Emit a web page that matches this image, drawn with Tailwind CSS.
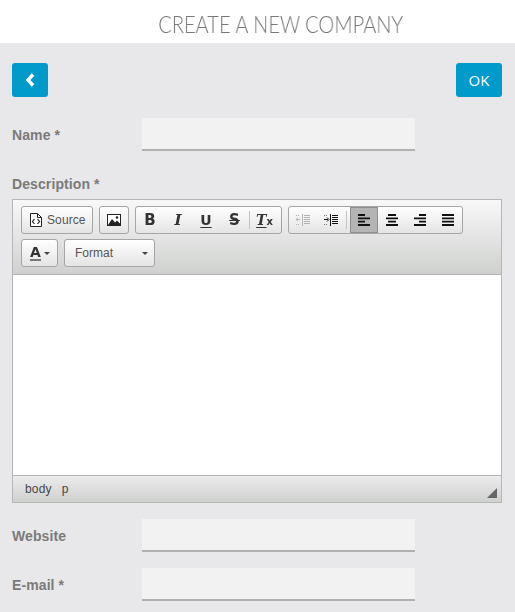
<!DOCTYPE html>
<html>
<head>
<meta charset="utf-8">
<script src="https://cdn.jsdelivr.net/npm/@tailwindcss/browser@4"></script>
</head>
<body class="bg-[#e8e8ea] font-['Liberation_Sans',sans-serif] h-[612px] overflow-hidden">
<header class="h-[43px] bg-white flex items-center justify-center pl-[47px]">
  <h1 class="font-['Lato',sans-serif] font-light text-[23px] leading-none text-[#777] pt-[6px] scale-x-[0.87] whitespace-nowrap will-change-transform">CREATE A NEW COMPANY</h1>
</header>
<main class="px-3 pr-[13px]">
  <div class="flex justify-between pt-5">
    <button class="w-9 h-[34px] bg-[#009bcb] rounded-[3px] flex items-center justify-center">
      <svg width="10" height="14" viewBox="0 0 10 14"><path d="M8 1.5 3 7l5 5.5" fill="none" stroke="#fff" stroke-width="3.4"/></svg>
    </button>
    <button class="w-[46px] h-[34px] bg-[#009bcb] rounded-[3px] text-white text-[15px] font-medium font-['Open_Sans',sans-serif]">OK</button>
  </div>
  <div class="flex mt-[21px] h-[33px] items-center">
    <label class="w-[130px] text-[14px] font-bold text-[#7a7a7a] tracking-[0.1px] pt-[1px]">Name *</label>
    <div class="w-[273px] h-[33px] bg-[#f2f2f2] border-b-2 border-[#b0b0b0]"></div>
  </div>
  <div class="text-[14px] font-bold text-[#7a7a7a] tracking-[0.1px] leading-4 mt-[25px]">Description *</div>
  <section class="mt-[7px] h-[304px] border border-[#b6b6b6] flex flex-col">
    <div class="h-[75px] border-b border-[#b6b6b6] bg-gradient-to-b from-[#f8f8f8] to-[#cfd1cf] pl-2 pt-[6px] flex flex-col gap-[5px]">
      <div class="flex gap-[6px]">
        <div class="w-[72px] h-[28px] border border-[#a6a6a6] rounded-[3px] bg-gradient-to-b from-[#fff] to-[#e4e4e4] flex items-center pl-[8px] gap-[5px] text-[12px] text-[#555] tracking-[0.1px]">
          <svg width="12" height="14" viewBox="0 0 12 14"><path d="M.5.5h7l4 4v9H.5z" fill="#fff" stroke="#222"/><path d="M7.5.5v4h4" fill="none" stroke="#222"/><path d="M4.5 6 2.5 8.5l2 2.5M7.5 6l2 2.5-2 2.5" fill="none" stroke="#222" stroke-width="1.2"/></svg>
          <span>Source</span>
        </div>
        <div class="w-[30px] h-[28px] border border-[#a6a6a6] rounded-[3px] bg-gradient-to-b from-[#fff] to-[#e4e4e4] flex items-center justify-center">
          <svg width="14" height="12" viewBox="0 0 14 12"><rect x="0.5" y="0.5" width="13" height="11" fill="#fff" stroke="#222"/><path d="M1 11 5 5l3 3.5 2-2 3 3V11z" fill="#222"/><circle cx="10" cy="3.5" r="1.3" fill="#222"/></svg>
        </div>
        <div class="w-[147px] h-[28px] border border-[#a6a6a6] rounded-[3px] bg-gradient-to-b from-[#fff] to-[#e4e4e4] flex items-center">
          <span class="w-[28px] text-center font-bold text-[15px] text-[#333] font-['DejaVu_Sans',sans-serif] will-change-transform">B</span>
          <span class="w-[28px] text-center font-bold italic text-[15px] text-[#333] font-['DejaVu_Serif',serif] will-change-transform">I</span>
          <span class="w-[28px] text-center font-bold text-[14px] leading-[15px] text-[#333] font-['DejaVu_Sans',sans-serif] will-change-transform"><span class="underline underline-offset-2">U</span></span>
          <span class="w-[28px] text-center font-bold text-[15px] text-[#333] line-through font-['DejaVu_Sans',sans-serif] pl-[1px] will-change-transform">S</span>
          <span class="w-px h-[18px] bg-[#c4c4c4] mx-[1px]"></span>
          <span class="w-[27px] text-center font-bold italic text-[14px] text-[#333] font-['DejaVu_Serif',serif] will-change-transform"><span class="underline underline-offset-2">T</span><span class="text-[10px] not-italic font-bold font-['DejaVu_Sans',sans-serif]">x</span></span>
        </div>
        <div class="w-[175px] h-[28px] border border-[#a6a6a6] rounded-[3px] bg-gradient-to-b from-[#fff] to-[#e4e4e4] flex items-center">
          <span class="w-[28px] flex justify-center">
            <svg width="14" height="12" viewBox="0 0 14 12" stroke="#b4b4b4"><path d="M6.5 0v12M8 1.5h6M8 3.5h6M8 5.5h6M8 7.5h6M8 9.5h6M0 5.5h4"/><path d="M2 3.5 0 5.5l2 2" fill="none"/><path d="M0 1.5h3M0 10.5h3" stroke-dasharray="1 1"/></svg>
          </span>
          <span class="w-[28px] flex justify-center">
            <svg width="14" height="12" viewBox="0 0 14 12" stroke="#111"><path d="M6.5 0v12M8 1.5h6M8 3.5h6M8 5.5h6M8 7.5h6M8 9.5h6M0 5.5h4"/><path d="M3 3.5 5 5.5 3 7.5" fill="none"/><path d="M0 1.5h3M0 10.5h3" stroke="#777" stroke-dasharray="1 1"/></svg>
          </span>
          <span class="w-px h-[18px] bg-[#c4c4c4] ml-[1px] mr-[3px]"></span>
          <span class="w-[28px] h-[26px] bg-[#b4b4b4] border border-[#8f8f8f] flex justify-center items-center">
            <svg width="12" height="12" viewBox="0 0 12 12" stroke="#111" stroke-width="1.8"><path d="M0 1h7M0 4.3h12M0 7.6h7M0 11h12"/></svg>
          </span>
          <span class="w-[28px] flex justify-center">
            <svg width="12" height="12" viewBox="0 0 12 12" stroke="#111" stroke-width="1.8"><path d="M2 1h8M0 4.3h12M2 7.6h8M0 11h12"/></svg>
          </span>
          <span class="w-[28px] flex justify-center">
            <svg width="12" height="12" viewBox="0 0 12 12" stroke="#111" stroke-width="1.8"><path d="M5 1h7M0 4.3h12M5 7.6h7M0 11h12"/></svg>
          </span>
          <span class="w-[28px] flex justify-center">
            <svg width="12" height="12" viewBox="0 0 12 12" stroke="#111" stroke-width="1.8"><path d="M0 1h12M0 4.3h12M0 7.6h12M0 11h12"/></svg>
          </span>
        </div>
      </div>
      <div class="flex gap-[6px]">
        <div class="w-[37px] h-[28px] border border-[#a6a6a6] rounded-[3px] bg-gradient-to-b from-[#fff] to-[#e4e4e4] flex items-center pl-[8px] gap-[3px]">
          <span class="font-bold text-[14px] leading-[14px] text-[#333] border-b-2 border-[#777] font-['DejaVu_Sans',sans-serif] will-change-transform">A</span>
          <span class="w-0 h-0 border-x-[3px] border-x-transparent border-t-[3px] border-t-[#444]"></span>
        </div>
        <div class="w-[91px] h-[28px] border border-[#a6a6a6] rounded-[3px] bg-gradient-to-b from-[#fff] to-[#e4e4e4] flex items-center justify-between pl-[10px] pr-[6px] text-[12px] text-[#555]">
          <span>Format</span>
          <span class="w-0 h-0 border-x-[3px] border-x-transparent border-t-[3px] border-t-[#444]"></span>
        </div>
      </div>
    </div>
    <div class="h-[200px] bg-white"></div>
    <div class="flex-1 border-t border-[#b6b6b6] bg-gradient-to-b from-[#ebebeb] to-[#cfd1cf] flex items-center pl-3 text-[12px] tracking-[0.2px] text-[#484848] gap-[10px] relative">
      <span>body</span><span>p</span>
      <span class="absolute right-[4px] bottom-[4px] w-0 h-0 border-l-[10px] border-l-transparent border-b-[10px] border-b-[#666]"></span>
    </div>
  </section>
  <div class="flex mt-[16px] h-[33px] items-center">
    <label class="w-[130px] text-[14px] font-bold text-[#7a7a7a] tracking-[0.1px] pt-[2px]">Website</label>
    <div class="w-[273px] h-[33px] bg-[#f2f2f2] border-b-2 border-[#b0b0b0]"></div>
  </div>
  <div class="flex mt-[16px] h-[33px] items-center">
    <label class="w-[130px] text-[14px] font-bold text-[#7a7a7a] tracking-[0.1px] pt-[2px]">E-mail *</label>
    <div class="w-[273px] h-[33px] bg-[#f2f2f2] border-b-2 border-[#b0b0b0]"></div>
  </div>
</main>
</body>
</html>
